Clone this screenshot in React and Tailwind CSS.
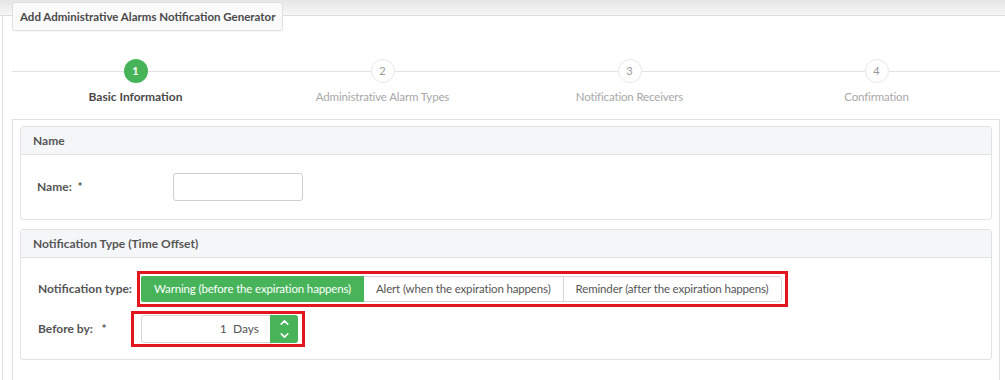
import React from 'react';
import { ChevronUp, ChevronDown } from 'lucide-react';

const steps = [
  { n: 1, label: 'Basic Information', active: true },
  { n: 2, label: 'Administrative Alarm Types' },
  { n: 3, label: 'Notification Receivers' },
  { n: 4, label: 'Confirmation' },
];

const Card = ({ title, children, className = '' }) => (
  <div className={`border border-[#dfe3e8] rounded-[3px] ${className}`}>
    <div className="h-[28px] bg-[#f5f6f8] border-b border-[#dfe3e8] flex items-center pl-[12px] text-[12px] font-bold text-[#555]">
      {title}
    </div>
    {children}
  </div>
);

const App = () => {
  return (
    <div className="w-full h-[380px] bg-white overflow-hidden font-['Lato',sans-serif] text-[#555]">
      {/* top band */}
      <div className="h-[16px] bg-linear-to-b from-[#e6e6e6] to-[#f7f7f7] border-b border-[#dcdcdc]" />

      <div className="relative ml-[2px] border-l border-[#dde2e8] h-full">
        {/* legend */}
        <div className="absolute left-[9px] -top-[14px] h-[29px] px-[7px] flex items-center bg-[#fafafa] border border-[#dde1e6] rounded-[3px] shadow-[0_1px_1px_rgba(0,0,0,0.04)] text-[11.5px] font-bold text-[#4a4a4a]">
          Add Administrative Alarms Notification Generator
        </div>

        <div className="ml-[9px] mr-[5px]">
          {/* stepper */}
          <div className="grid grid-cols-4 pt-[43px] h-[103px]">
            {steps.map((s) => (
              <div key={s.n} className="flex flex-col items-center">
                <div className="w-full flex items-center">
                  <div className="flex-1 h-px bg-[#dfe2e6]" />
                  <div
                    className={`w-[24px] h-[24px] rounded-full flex items-center justify-center text-[11px] ${
                      s.active
                        ? 'bg-[#47b45a] text-white font-bold'
                        : 'bg-white border border-[#e8e8e8] text-[#999]'
                    }`}
                  >
                    {s.n}
                  </div>
                  <div className="flex-1 h-px bg-[#dfe2e6]" />
                </div>
                <div
                  className={`mt-[6px] leading-[16px] ${
                    s.active
                      ? 'text-[12px] font-bold text-[#4a4a4a]'
                      : 'text-[11.5px] tracking-[-0.15px] text-[#a8a8a8]'
                  }`}
                >
                  {s.label}
                </div>
              </div>
            ))}
          </div>

          {/* box */}
          <div className="border-t border-l border-r border-[#dde1e6] px-[7px] pt-[6px] h-[300px]">
            <Card title="Name">
              <div className="flex items-center h-[64px] pl-[16px]">
                <div className="w-[136px] text-[12px] font-bold text-[#555]">
                  Name:&nbsp; *
                </div>
                <input
                  type="text"
                  className="w-[130px] h-[28px] border border-[#ccd0d5] rounded-[3px] outline-none px-2 text-[12px]"
                />
              </div>
            </Card>

            <Card title="Notification Type (Time Offset)" className="mt-[9px]">
              <div className="h-[101px] pl-[17px] pt-[18px] flex flex-col gap-[13px]">
                <div className="flex items-center h-[26px]">
                  <div className="w-[103px] text-[12px] font-bold text-[#555]">Notification type:</div>
                  <div className="-ml-[4px] -my-[5px] border-[3px] border-[#e3151d] pl-[1px] pr-[3px] py-[2px]">
                    <div className="flex h-[26px] border border-[#d3d7dc] rounded-[3px] text-[11.5px] tracking-[-0.15px]">
                      <div className="bg-[#47b45a] text-white px-[13px] flex items-center rounded-l-[2px] -my-px -ml-px">
                        Warning (before the expiration happens)
                      </div>
                      <div className="px-[12px] flex items-center text-[#555]">
                        Alert (when the expiration happens)
                      </div>
                      <div className="px-[12px] flex items-center text-[#555] border-l border-[#d3d7dc]">
                        Reminder (after the expiration happens)
                      </div>
                    </div>
                  </div>
                </div>

                <div className="flex items-center h-[28px]">
                  <div className="w-[103px] text-[12px] font-bold text-[#555]">Before by:&nbsp;&nbsp; *</div>
                  <div className="-ml-[10px] -my-[4px] border-[3px] border-[#e3151d] pl-[7px] pr-[4px] py-[1px]">
                    <div className="flex w-[157px] h-[28px] border border-[#d3d7dc] rounded-[3px]">
                      <div className="flex-1 flex items-center justify-end pr-[11px] text-[12px] text-[#555]">
                        1&nbsp; Days
                      </div>
                      <div className="w-[28px] -my-px -mr-px bg-[#47b45a] rounded-r-[3px] flex flex-col items-center justify-center text-white">
                        <ChevronUp size={13} strokeWidth={3} />
                        <ChevronDown size={13} strokeWidth={3} />
                      </div>
                    </div>
                  </div>
                </div>
              </div>
            </Card>
          </div>
        </div>
      </div>
    </div>
  );
};

export default App;
